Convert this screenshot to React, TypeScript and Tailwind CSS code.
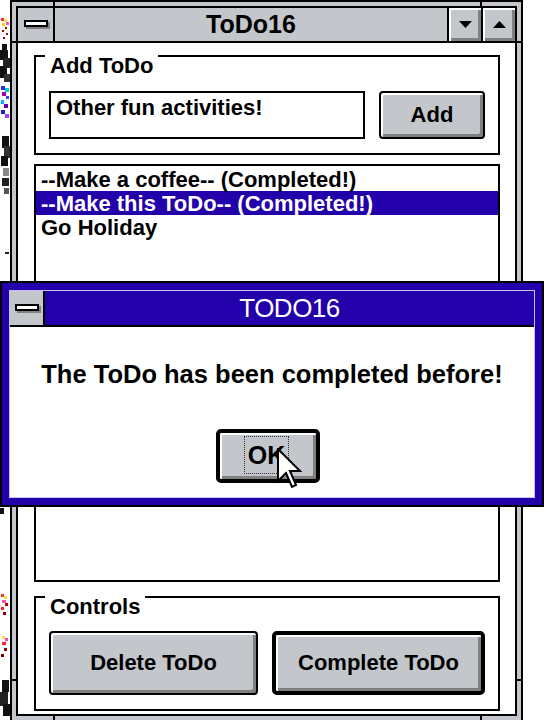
import React from "react";

function DesktopBits() {
  return (
    <svg
      className="absolute left-0 top-0"
      width="10"
      height="720"
      viewBox="0 0 10 720"
      shapeRendering="crispEdges"
    >
      <rect x="1" y="18" width="3" height="3" fill="#ff2a2a" />
      <rect x="4" y="19" width="3" height="3" fill="#ffe23a" />
      <rect x="6" y="22" width="3" height="3" fill="#ff4fc8" />
      <rect x="2" y="23" width="3" height="3" fill="#ffd000" />
      <rect x="5" y="27" width="2" height="2" fill="#c00000" />
      <rect x="2" y="30" width="2" height="2" fill="#900000" />
      <rect x="6" y="33" width="2" height="2" fill="#b00000" />
      <rect x="3" y="37" width="2" height="2" fill="#800000" />
      <rect x="2" y="44" width="5" height="6" fill="#111" />
      <rect x="0" y="50" width="8" height="10" fill="#111" />
      <rect x="3" y="58" width="7" height="10" fill="#222" />
      <rect x="0" y="66" width="7" height="12" fill="#111" />
      <rect x="4" y="74" width="6" height="8" fill="#333" />
      <rect x="1" y="86" width="4" height="4" fill="#2a2aff" />
      <rect x="5" y="88" width="4" height="4" fill="#00d0d0" />
      <rect x="2" y="92" width="4" height="4" fill="#9a00c0" />
      <rect x="6" y="96" width="3" height="3" fill="#4040ff" />
      <rect x="1" y="100" width="3" height="4" fill="#00b0ff" />
      <rect x="4" y="104" width="4" height="4" fill="#6000a0" />
      <rect x="1" y="110" width="4" height="4" fill="#2020c0" />
      <rect x="5" y="114" width="4" height="4" fill="#a040ff" />
      <rect x="2" y="136" width="7" height="12" fill="#111" />
      <rect x="4" y="146" width="6" height="12" fill="#333" />
      <rect x="1" y="156" width="7" height="10" fill="#111" />
      <rect x="3" y="168" width="6" height="8" fill="#888" />
      <rect x="2" y="178" width="7" height="8" fill="#222" />
      <rect x="4" y="188" width="5" height="6" fill="#555" />
      <rect x="5" y="252" width="4" height="2" fill="#222" />
      <rect x="0" y="508" width="4" height="6" fill="#111" />
      <rect x="1" y="594" width="3" height="3" fill="#ff3030" />
      <rect x="4" y="596" width="3" height="3" fill="#ffe030" />
      <rect x="2" y="600" width="4" height="3" fill="#ff50c0" />
      <rect x="5" y="603" width="3" height="3" fill="#c00000" />
      <rect x="1" y="607" width="3" height="3" fill="#ff2020" />
      <rect x="3" y="612" width="3" height="3" fill="#900000" />
      <rect x="2" y="636" width="3" height="3" fill="#ffe030" />
      <rect x="5" y="638" width="3" height="3" fill="#ff40c0" />
      <rect x="2" y="642" width="4" height="3" fill="#ff2020" />
      <rect x="4" y="648" width="3" height="3" fill="#a00000" />
      <rect x="1" y="654" width="3" height="3" fill="#700000" />
      <rect x="2" y="680" width="7" height="12" fill="#111" />
      <rect x="0" y="692" width="8" height="14" fill="#222" />
      <rect x="3" y="704" width="7" height="12" fill="#111" />
    </svg>
  );
}

function CaptionButton({ dir }: { dir: "up" | "down" }) {
  return (
    <div className="flex w-[34px] items-center justify-center border-l-2 border-black bg-[#c3c7cb] shadow-[inset_2px_2px_0_#ffffff,inset_-3px_-3px_0_#808080]">
      <svg width="13" height="7" viewBox="0 0 13 7">
        {dir === "down" ? (
          <path d="M0 0 H13 L6.5 7 Z" fill="#000" />
        ) : (
          <path d="M0 7 H13 L6.5 0 Z" fill="#000" />
        )}
      </svg>
    </div>
  );
}

function MainWindow() {
  return (
    <div className="relative ml-[10px] w-[513px] border-2 border-black bg-[#c3c7cb] p-[4px]">
      {/* resize-border notches */}
      <div className="absolute left-[41px] top-0 h-[4px] w-[2px] bg-black" />
      <div className="absolute left-[468px] top-0 h-[4px] w-[2px] bg-black" />
      <div className="absolute left-0 top-[39px] h-[2px] w-[4px] bg-black" />
      <div className="absolute right-0 top-[39px] h-[2px] w-[4px] bg-black" />
      <div className="absolute bottom-0 left-[41px] h-[4px] w-[2px] bg-black" />
      <div className="absolute bottom-0 left-[468px] h-[4px] w-[2px] bg-black" />
      <div className="absolute bottom-[39px] left-0 h-[2px] w-[4px] bg-black" />
      <div className="absolute bottom-[39px] right-0 h-[2px] w-[4px] bg-black" />

      <div className="flex flex-col border-2 border-black bg-white">
        {/* caption */}
        <div className="flex h-[35px] border-b-2 border-black bg-[#c3c7cb]">
          <div className="flex w-[37px] items-center justify-center border-r-2 border-black pb-[2px]">
            <div className="h-[7px] w-[24px] border-2 border-black bg-white shadow-[2px_2px_0_#808080]" />
          </div>
          <div className="flex flex-1 items-center justify-center text-[25px] font-bold leading-none">
            ToDo16
          </div>
          <CaptionButton dir="down" />
          <CaptionButton dir="up" />
        </div>

        {/* client */}
        <div className="flex flex-col pb-[3px] pl-[16px] pr-[15px] pt-[12px] text-[22px] font-bold">
          {/* Add ToDo group */}
          <div className="relative flex h-[100px] gap-[14px] border-2 border-black px-[13px] pt-[34px]">
            <span className="absolute -top-[4px] left-[9px] bg-white px-[5px] leading-[25px]">
              Add ToDo
            </span>
            <div className="h-[48px] flex-1 border-2 border-black px-[5px] pt-[2px] leading-[25px]">
              Other fun activities!
            </div>
            <div className="flex h-[48px] w-[106px] items-center justify-center rounded-[4px] border-2 border-black bg-[#c3c7cb] pb-[1px] shadow-[inset_2px_2px_0_#ffffff,inset_-3px_-3px_0_#808080]">
              Add
            </div>
          </div>

          {/* list box */}
          <div className="mt-[9px] h-[418px] border-2 border-black pt-[1px]">
            <div className="h-[24px] pl-[5px] leading-[26px]">--Make a coffee-- (Completed!)</div>
            <div className="h-[24px] bg-[#2200aa] pl-[5px] leading-[26px] text-white">
              --Make this ToDo-- (Completed!)
            </div>
            <div className="h-[24px] pl-[5px] leading-[26px]">Go Holiday</div>
          </div>

          {/* Controls group */}
          <div className="relative mt-[14px] flex h-[115px] gap-[14px] border-2 border-black px-[13px] pt-[33px]">
            <span className="absolute -top-[4px] left-[9px] bg-white px-[5px] leading-[25px]">
              Controls
            </span>
            <div className="flex h-[64px] flex-1 items-center justify-center rounded-[4px] border-2 border-black bg-[#c3c7cb] pb-[1px] shadow-[inset_2px_2px_0_#ffffff,inset_-3px_-3px_0_#808080]">
              Delete ToDo
            </div>
            <div className="flex h-[64px] flex-1 items-center justify-center rounded-[5px] border-[4px] border-black bg-[#c3c7cb] pb-[1px] shadow-[inset_2px_2px_0_#ffffff,inset_-3px_-3px_0_#808080]">
              Complete ToDo
            </div>
          </div>
        </div>
      </div>
    </div>
  );
}

function Dialog() {
  return (
    <div className="absolute left-0 top-[281px] h-[226px] w-[544px] border-2 border-black bg-[#2200aa] p-[7px]">
      <div className="flex h-full flex-col border border-[#c8c0f8] bg-white">
        <div className="flex h-[36px] border-b-2 border-black bg-[#2200aa]">
          <div className="flex w-[35px] items-center justify-center border-r-2 border-black bg-[#c3c7cb] pb-[2px]">
            <div className="h-[7px] w-[24px] border-2 border-black bg-white shadow-[2px_2px_0_#808080]" />
          </div>
          <div className="flex flex-1 items-center justify-center text-[26px] leading-none tracking-[-0.5px] text-white">
            TODO16
          </div>
        </div>
        <div className="flex flex-1 flex-col items-center pt-[33px]">
          <div className="text-[25.5px] font-bold leading-[29px]">
            The ToDo has been completed before!
          </div>
          <div className="mr-[8px] mt-[40px] flex h-[54px] w-[104px] items-center justify-center rounded-[5px] border-[4px] border-black bg-[#c3c7cb] pb-[2px] pr-[3px] shadow-[inset_2px_2px_0_#ffffff,inset_-3px_-3px_0_#808080]">
            <span className="h-[38px] border border-dotted border-[#333] px-[3px] text-[25px] font-bold leading-[36px]">
              OK
            </span>
          </div>
        </div>
      </div>
    </div>
  );
}

function Cursor() {
  return (
    <svg
      className="absolute left-[277px] top-[448px]"
      width="26"
      height="42"
      viewBox="0 0 13 21"
    >
      <path
        d="M0.5 0.5 L0.5 16.5 L4.5 12.5 L7.5 19.5 L9.5 18.5 L6.5 11.5 L11.5 11.5 Z"
        fill="#ffffff"
        stroke="#000000"
        strokeWidth="1"
        strokeLinejoin="miter"
      />
    </svg>
  );
}

export default function App() {
  return (
    <div className="relative h-[720px] w-[546px] overflow-hidden bg-white font-['Liberation_Sans',Arial,sans-serif] text-black">
      <DesktopBits />
      <MainWindow />
      <Dialog />
      <Cursor />
    </div>
  );
}
